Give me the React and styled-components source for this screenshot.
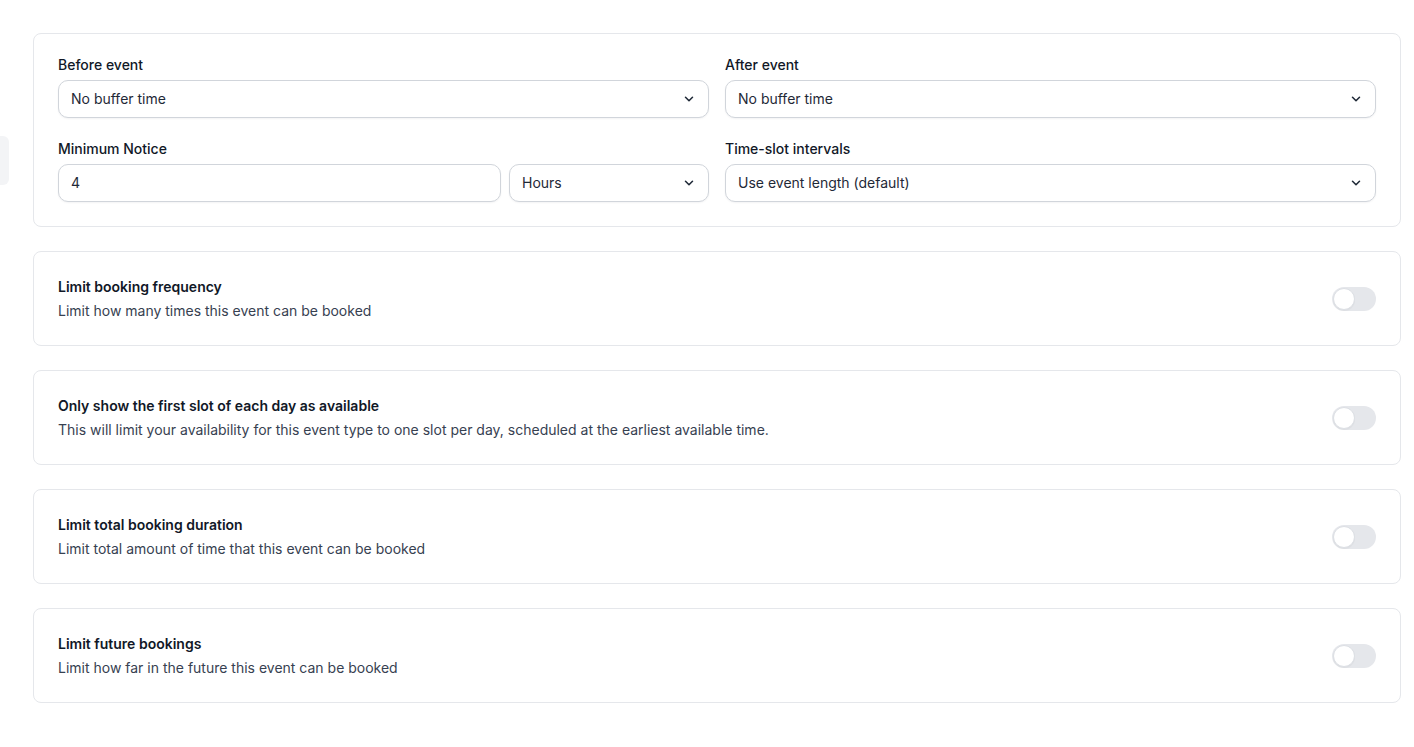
import React from 'react';
import styled, { createGlobalStyle } from 'styled-components';
import { ChevronDown } from 'lucide-react';

const GlobalStyle = createGlobalStyle`
  html, body {
    margin: 0;
    padding: 0;
    background: #fff;
  }
  body {
    font-family: Inter, 'Noto Sans', 'Liberation Sans', sans-serif;
    color: #111827;
    -webkit-font-smoothing: antialiased;
  }
  * { box-sizing: border-box; }
`;

const Page = styled.div`
  display: flex;
  padding: 33px 13px 40px 0;
`;

const Rail = styled.div`
  width: 33px;
  flex-shrink: 0;
`;

const RailTab = styled.div`
  width: 9px;
  height: 49px;
  margin-top: 103px;
  background: #f3f4f6;
  border-radius: 0 6px 6px 0;
`;

const Stack = styled.div`
  flex: 1;
  display: flex;
  flex-direction: column;
  gap: 24px;
`;

const Card = styled.div`
  border: 1px solid #e5e7eb;
  border-radius: 8px;
  background: #fff;
`;

const FieldsGrid = styled.div`
  display: grid;
  grid-template-columns: 1fr 1fr;
  column-gap: 16px;
  row-gap: 21px;
  padding: 21px 24px 24px;
`;

const Field = styled.div`
  display: flex;
  flex-direction: column;
  min-width: 0;
`;

const Label = styled.label`
  font-size: 14px;
  line-height: 20px;
  font-weight: 500;
  color: #111827;
  margin-bottom: 5px;
`;

const Control = styled.div`
  height: 38px;
  display: flex;
  align-items: center;
  justify-content: space-between;
  padding: 0 12px;
  border: 1px solid #d1d5db;
  border-radius: 10px;
  background: #fff;
  box-shadow: 0 1px 2px rgba(16, 24, 40, 0.05);
  font-size: 14px;
  line-height: 20px;
  color: #1f2937;
  width: ${p => (p.$width ? `${p.$width}px` : 'auto')};
  flex: ${p => (p.$width ? '0 0 auto' : '1 1 auto')};
  min-width: 0;

  svg {
    color: #1f2937;
    flex-shrink: 0;
  }
`;

const InputRow = styled.div`
  display: flex;
  gap: 8px;
`;

const ToggleCard = styled(Card)`
  display: flex;
  align-items: center;
  justify-content: space-between;
  padding: 25px 24px 24px;
`;

const Title = styled.div`
  font-size: 14px;
  line-height: 20px;
  font-weight: 600;
  color: #111827;
`;

const Desc = styled.div`
  margin-top: 4px;
  font-size: 14px;
  line-height: 20px;
  color: #374151;
`;

const Track = styled.div`
  width: 44px;
  height: 24px;
  border-radius: 12px;
  background: #e5e7eb;
  padding: 1px;
  flex-shrink: 0;
`;

const Knob = styled.div`
  width: 22px;
  height: 22px;
  border-radius: 50%;
  background: #fff;
  border: 1px solid #dcdfe4;
  box-shadow: 0 1px 1px rgba(0, 0, 0, 0.04);
`;

const Select = ({ value, width }) => (
  <Control $width={width}>
    <span>{value}</span>
    <ChevronDown size={14} strokeWidth={2.6} />
  </Control>
);

const Toggle = () => (
  <Track>
    <Knob />
  </Track>
);

const limits = [
  {
    title: 'Limit booking frequency',
    desc: 'Limit how many times this event can be booked',
  },
  {
    title: 'Only show the first slot of each day as available',
    desc: 'This will limit your availability for this event type to one slot per day, scheduled at the earliest available time.',
  },
  {
    title: 'Limit total booking duration',
    desc: 'Limit total amount of time that this event can be booked',
  },
  {
    title: 'Limit future bookings',
    desc: 'Limit how far in the future this event can be booked',
  },
];

export default function App() {
  return (
    <>
      <GlobalStyle />
      <Page>
        <Rail>
          <RailTab />
        </Rail>
        <Stack>
          <Card>
            <FieldsGrid>
              <Field>
                <Label>Before event</Label>
                <Select value="No buffer time" />
              </Field>
              <Field>
                <Label>After event</Label>
                <Select value="No buffer time" />
              </Field>
              <Field>
                <Label>Minimum Notice</Label>
                <InputRow>
                  <Control>4</Control>
                  <Select value="Hours" width={200} />
                </InputRow>
              </Field>
              <Field>
                <Label>Time-slot intervals</Label>
                <Select value="Use event length (default)" />
              </Field>
            </FieldsGrid>
          </Card>
          {limits.map(item => (
            <ToggleCard key={item.title}>
              <div>
                <Title>{item.title}</Title>
                <Desc>{item.desc}</Desc>
              </div>
              <Toggle />
            </ToggleCard>
          ))}
        </Stack>
      </Page>
    </>
  );
}
